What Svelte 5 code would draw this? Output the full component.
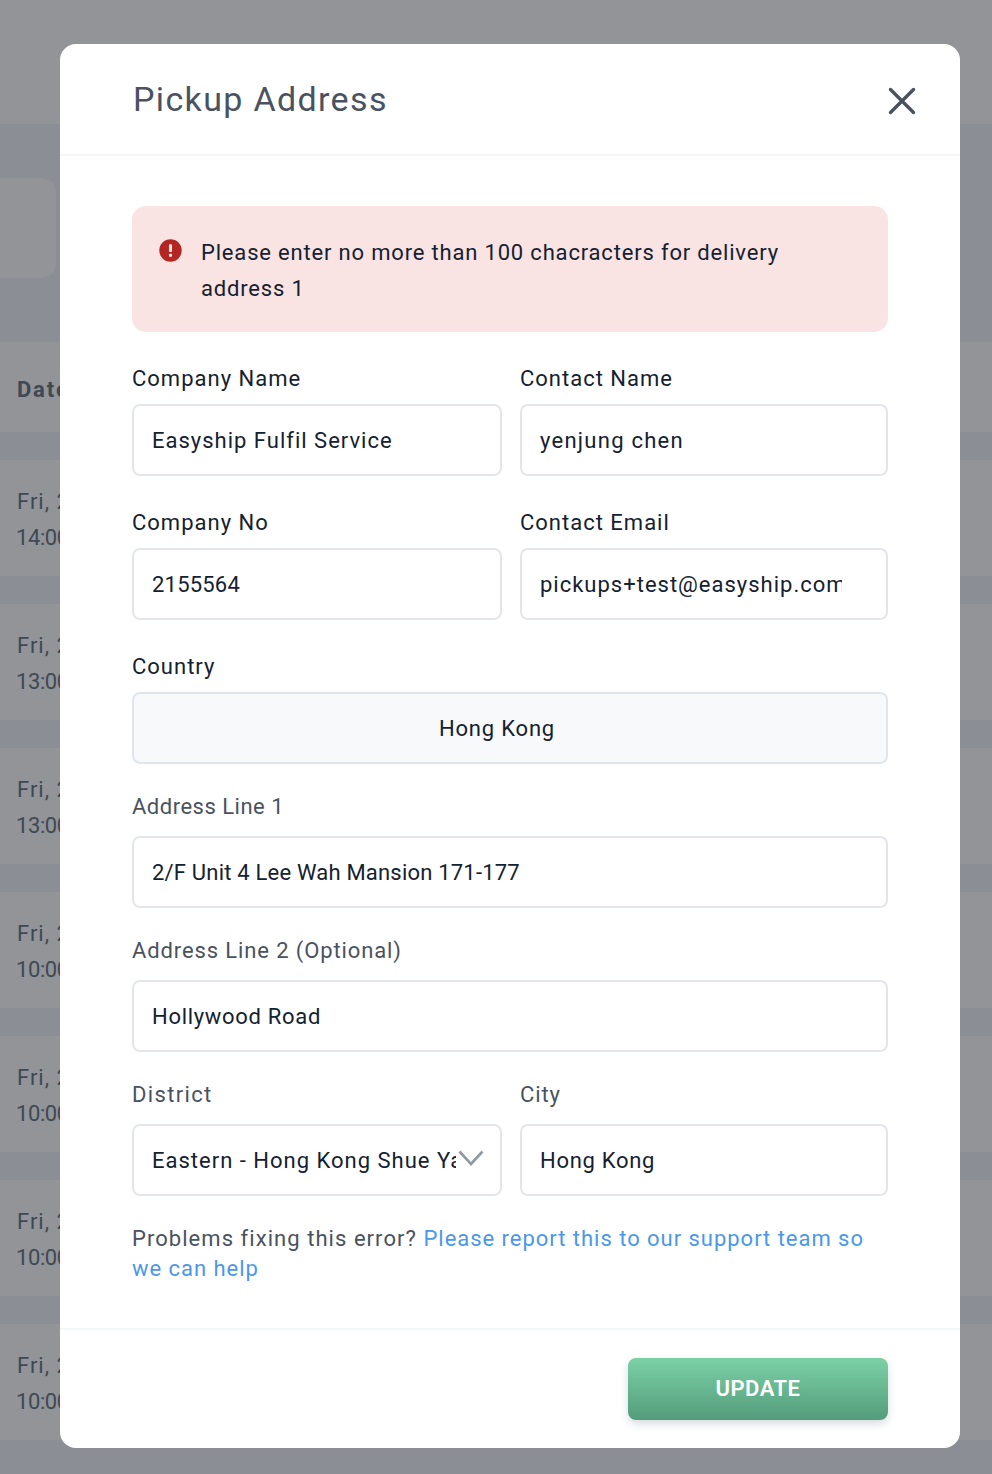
<script lang="ts">
	const rows = [
		['Fri, 25 Sep', '14:00'],
		['Fri, 25 Sep', '13:00'],
		['Fri, 25 Sep', '13:00'],
		['Fri, 25 Sep', '10:00'],
		['Fri, 25 Sep', '10:00'],
		['Fri, 25 Sep', '10:00'],
		['Fri, 25 Sep', '10:00']
	];
</script>

<div class="page">
	<!-- dimmed page behind the modal -->
	<div class="topbar"></div>
	<div class="stat-card"></div>
	<div class="table-head">Date</div>
	{#each rows as row}
		<div class="row">
			<div>{row[0]}</div>
			<div class="time">{row[1]}</div>
		</div>
	{/each}

	<div class="modal">
		<header class="modal-head">
			<h2>Pickup Address</h2>
			<button class="close" aria-label="Close">
				<svg width="28" height="28" viewBox="0 0 28 28" fill="none" stroke="#4a5260" stroke-width="3.4" stroke-linecap="round">
					<path d="M2.5 2.5 25.5 25.5M25.5 2.5 2.5 25.5" />
				</svg>
			</button>
		</header>

		<div class="modal-body">
			<div class="alert">
				<svg class="alert-icon" width="23" height="23" viewBox="0 0 24 24">
					<circle cx="12" cy="12" r="11.7" fill="#b32722" />
					<rect x="10.4" y="5.4" width="3.2" height="8.2" rx="0.8" fill="#f9e3e3" />
					<rect x="10.4" y="15.4" width="3.2" height="3.2" rx="0.8" fill="#f9e3e3" />
				</svg>
				<p>Please enter no more than 100 chacracters for delivery address 1</p>
			</div>

			<div class="grid">
				<label class="field">
					<span class="label">Company Name</span>
					<input readonly value="Easyship Fulfil Service" />
				</label>
				<label class="field">
					<span class="label">Contact Name</span>
					<input class="loose" readonly value="yenjung chen" />
				</label>
				<label class="field">
					<span class="label">Company No</span>
					<input class="digits" readonly value="2155564" />
				</label>
				<label class="field">
					<span class="label">Contact Email</span>
					<input readonly value="pickups+test@easyship.com" />
				</label>
				<div class="field wide">
					<span class="label">Country</span>
					<div class="control disabled"><span>Hong Kong</span></div>
				</div>
				<label class="field wide">
					<span class="label muted tight">Address Line 1</span>
					<input class="digits" readonly value="2/F Unit 4 Lee Wah Mansion 171-177" />
				</label>
				<label class="field wide">
					<span class="label muted">Address Line 2 (Optional)</span>
					<input class="snug" readonly value="Hollywood Road" />
				</label>
				<div class="field">
					<span class="label muted wider">District</span>
					<div class="control select">
						<span>Eastern - Hong Kong Shue Yan University</span>
						<svg class="chevron" width="26" height="16" viewBox="0 0 26 16" fill="none" stroke="#8f98a3" stroke-width="2.6">
							<path d="M1.5 1.5 13 14 24.5 1.5" />
						</svg>
					</div>
				</div>
				<label class="field">
					<span class="label muted">City</span>
					<input class="snug" readonly value="Hong Kong" />
				</label>
			</div>

			<p class="help">
				Problems fixing this error? <a href="#support">Please report this to our support team so we can help</a>
			</p>
		</div>

		<footer class="modal-foot">
			<button class="update">UPDATE</button>
		</footer>
	</div>
</div>

<style>
	:global(body) {
		margin: 0;
	}
	.page {
		position: relative;
		height: 1474px;
		overflow: hidden;
		background: #8b8e95;
		font-family: "Roboto", "Liberation Sans", sans-serif;
		color: #3f4955;
		font-size: 22px;
		letter-spacing: 1px;
	}
	.topbar {
		height: 124px;
		background: #929498;
	}
	.stat-card {
		width: 56px;
		height: 100px;
		margin: 54px 0 64px;
		background: #929497;
		border-radius: 0 14px 14px 0;
	}
	.table-head {
		height: 90px;
		line-height: 96px;
		padding-left: 17px;
		margin-bottom: 28px;
		background: #929498;
		font-weight: 700;
		letter-spacing: 1.8px;
	}
	.row {
		height: 116px;
		box-sizing: border-box;
		padding: 24px 0 0 17px;
		line-height: 36px;
		margin-bottom: 28px;
		background: #929498;
	}
	.time {
		letter-spacing: -0.4px;
		margin-left: -1px;
	}
	.modal {
		position: absolute;
		left: 60px;
		top: 44px;
		width: 900px;
		height: 1404px;
		display: flex;
		flex-direction: column;
		background: #fff;
		border-radius: 16px;
		color: #142130;
	}
	.modal-head {
		height: 112px;
		box-sizing: border-box;
		flex: none;
		display: flex;
		align-items: center;
		justify-content: space-between;
		padding: 0 44px 0 73px;
		border-bottom: 2px solid #f5f6f8;
	}
	h2 {
		margin: 0;
		font-size: 34px;
		font-weight: 400;
		letter-spacing: 1.35px;
		color: #4a5260;
	}
	.close {
		display: flex;
		padding: 0;
		margin-top: 4px;
		border: none;
		background: none;
	}
	.modal-body {
		flex: 1;
		padding: 50px 72px 0;
	}
	.alert {
		display: flex;
		gap: 19px;
		height: 126px;
		box-sizing: border-box;
		padding: 29px 26px 0 27px;
		border-radius: 14px;
		background: #f9e3e3;
		letter-spacing: 0.82px;
	}
	.alert-icon {
		flex: none;
		margin-top: 4px;
	}
	.alert p {
		margin: 0;
		line-height: 36px;
	}
	.grid {
		display: grid;
		grid-template-columns: 370px 368px;
		gap: 29px 18px;
		margin-top: 29px;
	}
	.field {
		display: flex;
		flex-direction: column;
	}
	.wide {
		grid-column: 1 / -1;
	}
	.label {
		line-height: 36px;
		margin-bottom: 7px;
	}
	.muted {
		line-height: 28px;
		margin-bottom: 15px;
		color: #4a5260;
		letter-spacing: 0.88px;
	}
	.tight {
		letter-spacing: 0.5px;
	}
	.wider {
		letter-spacing: 1.35px;
	}
	input,
	.control {
		height: 72px;
		box-sizing: border-box;
		width: 100%;
		border: 2px solid #e2e6ec;
		border-radius: 8px;
		padding: 0 44px 0 18px;
		background: #fff;
		font: inherit;
		letter-spacing: inherit;
		color: #142130;
		outline: none;
	}
	input.loose {
		letter-spacing: 1.25px;
	}
	input.digits {
		letter-spacing: 0.2px;
	}
	input.snug {
		letter-spacing: 0.7px;
	}
	.control {
		position: relative;
		display: flex;
		align-items: center;
	}
	.control span {
		flex: 1;
		min-width: 0;
		white-space: nowrap;
		overflow: hidden;
	}
	.disabled {
		background: #f7f9fb;
		text-align: center;
		letter-spacing: 0.8px;
	}
	.chevron {
		position: absolute;
		right: 16px;
		top: 24px;
	}
	.help {
		margin: 28px 0 0;
		line-height: 30px;
		color: #4a5260;
		letter-spacing: 1.05px;
	}
	.help a {
		color: #4a98e8;
		text-decoration: none;
		letter-spacing: 0.97px;
	}
	.modal-foot {
		flex: none;
		height: 120px;
		box-sizing: border-box;
		display: flex;
		justify-content: flex-end;
		padding: 28px 72px 0;
		border-top: 2px solid #f5f6f8;
	}
	.update {
		width: 260px;
		height: 62px;
		padding-bottom: 2px;
		border: none;
		border-radius: 8px;
		background: linear-gradient(#7bd1a6, #549c7c);
		box-shadow: 0 4px 8px rgba(60, 80, 100, 0.2);
		color: #fff;
		font: inherit;
		font-weight: 600;
		letter-spacing: 0.5px;
	}
</style>
